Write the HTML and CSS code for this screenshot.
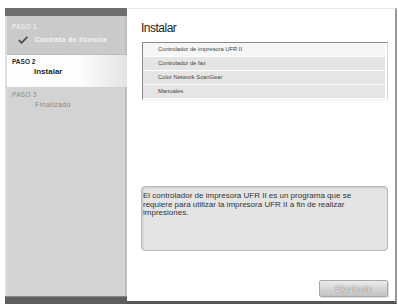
FILE: index.html
```html
<!DOCTYPE html>
<html lang="es">
<head>
  <meta charset="UTF-8">
  <title>Instalar</title>
  <link rel="stylesheet" href="styles.css">
</head>
<body>
  <div class="window">
    <!-- pasos -->
    <aside class="sidebar">
      <div class="sidebar-top"></div>
      <div class="step step-done">
        <div class="step-label">PASO 1</div>
        <div class="step-title">
          <svg class="check" width="10" height="8" viewBox="0 0 10 8">
            <path d="M0.8 4.2 L3.6 6.8 L9.4 0.8" fill="none" stroke="#4a4a4a" stroke-width="1.8"/>
          </svg>
          <span>Contrato de licencia</span>
        </div>
      </div>
      <div class="step step-current">
        <div class="step-label">PASO 2</div>
        <div class="step-title">Instalar</div>
      </div>
      <div class="step step-next">
        <div class="step-label">PASO 3</div>
        <div class="step-title">Finalizado</div>
      </div>
      <div class="sidebar-bottom"></div>
    </aside>

    <!-- contenido -->
    <main class="content">
      <h1 class="title">Instalar</h1>
      <ul class="component-list">
        <li class="component first">Controlador de impresora UFR II</li>
        <li class="component">Controlador de fax</li>
        <li class="component">Color Network ScanGear</li>
        <li class="component">Manuales</li>
      </ul>
      <div class="description">
        El controlador de impresora UFR II es un programa que se<br>
        requiere para utilizar la impresora UFR II a fin de realizar<br>
        impresiones.
      </div>
      <div class="actions">
        <button class="btn-next" disabled>Siguiente</button>
      </div>
    </main>
  </div>
</body>
</html>
```

FILE: styles.css
```css
* {
  margin: 0;
  padding: 0;
  box-sizing: border-box;
}

body {
  font-family: 'Liberation Sans', Arial, sans-serif;
  background: #fff;
  color: #333;
}

.window {
  display: flex;
  margin: 8px 1px 0 5px;
  height: 296px;
}

/* pasos */
.sidebar {
  width: 122px;
  display: flex;
  flex-direction: column;
  background: #d3d3d3;
  border-left: 2px solid #dedede;
  border-right: 2px solid #bdbdbd;
}

.sidebar-top {
  height: 8px;
  background: #6e6e6e;
  margin: 0 -2px;
}

.sidebar-bottom {
  height: 8px;
  margin: auto -2px 0;
  background: #5e5e5e;
  border-top: 1px solid #888;
}

.step {
  padding-left: 5px;
}

.step-label {
  font-size: 6.5px;
  line-height: 8px;
  font-weight: bold;
}

.step-title {
  display: flex;
  align-items: center;
  padding-left: 23px;
}

.step-done {
  height: 39px;
  padding-top: 7px;
  background: #cacaca;
  border-bottom: 1px solid #bcbcbc;
  color: #f6f6f6;
}

.step-done .step-label {
  font-weight: normal;
  letter-spacing: 0.3px;
}

.step-done .step-title {
  margin-top: 4px;
  padding-left: 6px;
  gap: 7px;
  font-size: 6.6px;
  line-height: 9px;
  font-weight: bold;
  letter-spacing: 0.45px;
}

.step-current {
  height: 32px;
  padding-top: 3px;
  background: linear-gradient(90deg, #fff 0%, #fdfdfd 60%, #e4e4e4 100%);
  color: #2a2a2a;
  margin-right: -2px;
}

.step-current .step-title {
  margin-top: 1px;
  font-size: 8px;
  line-height: 10px;
  font-weight: bold;
  padding-left: 22px;
}

.step-next {
  padding-top: 4px;
  color: #888;
}

.step-next .step-label {
  font-weight: normal;
  letter-spacing: 0.3px;
}

.step-next .step-title {
  margin-top: 1px;
  font-size: 7px;
  line-height: 9px;
  letter-spacing: 0.4px;
}

/* contenido */
.content {
  flex: 1;
  display: flex;
  flex-direction: column;
  background: #fff;
  border-top: 1px solid #e8e8e8;
  border-right: 2px solid #999;
  border-bottom: 3px solid #555;
  padding: 12px 7px 0 14px;
}

.title {
  font-size: 12px;
  line-height: 14px;
  font-weight: normal;
  letter-spacing: -0.5px;
  color: #222;
}

.component-list {
  list-style: none;
  margin: 7px 0 0 1px;
  border-top: 1px solid #8a8a8a;
  border-left: 1px solid #8a8a8a;
  border-right: 1px solid #d6d6d6;
  border-bottom: 1px solid #f0f0f0;
}

.component {
  height: 14px;
  line-height: 13px;
  padding-left: 15px;
  font-size: 5.8px;
  color: #444;
  background: #e5e5e5;
  border-bottom: 1px solid #fff;
  margin-right: 2px;
}

.component.first {
  background: #f6f6f6;
}

.description {
  margin: 86px 0 0 0;
  height: 65px;
  padding: 5px 2px 0 1px;
  font-size: 8px;
  line-height: 8.6px;
  color: #333;
  background: #e4e4e4;
  border: 1px solid #b8b8b8;
  border-radius: 4px;
  box-shadow: inset 1px 1px 2px rgba(0, 0, 0, 0.12);
}

.actions {
  display: flex;
  justify-content: flex-end;
  margin-top: 29px;
}

.btn-next {
  width: 69px;
  height: 17px;
  font-family: 'Liberation Sans', Arial, sans-serif;
  font-size: 9px;
  color: #f2f2f2;
  text-shadow: 0 0 1px #7a7a7a, 0 0 1px #7a7a7a;
  background: linear-gradient(180deg, #ececec 0%, #d4d4d4 55%, #c2c2c2 100%);
  border: 1px solid #a8a8a8;
  border-radius: 2px;
  box-shadow: 1px 1px 0 #e0e0e0;
}
```
